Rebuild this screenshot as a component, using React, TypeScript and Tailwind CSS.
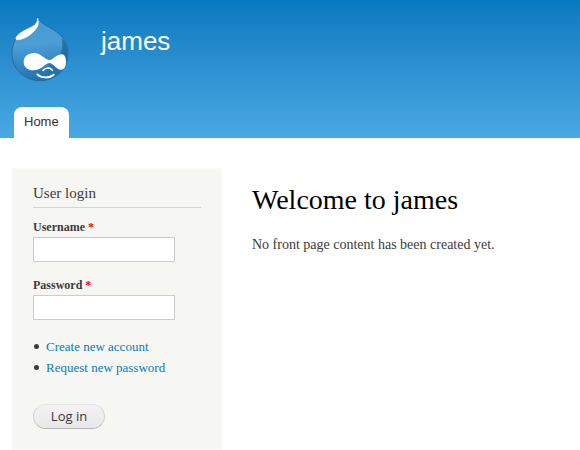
import React, { useState } from 'react';

const links = [
  { label: 'Create new account', href: '#register' },
  { label: 'Request new password', href: '#password' },
];

function Logo() {
  return (
    <svg viewBox="33 48 174 198" className="w-[58px] h-[66px]" role="img" aria-hidden="true">
      <defs>
        <linearGradient id="drop" x1="0.4" y1="0" x2="0.5" y2="1">
          <stop offset="0" stopColor="#4597d0" />
          <stop offset="0.4" stopColor="#4c9fd6" />
          <stop offset="0.7" stopColor="#3589c5" />
          <stop offset="1" stopColor="#2273ae" />
        </linearGradient>
        <linearGradient id="shade" x1="0" y1="0.8" x2="1" y2="0.4">
          <stop offset="0" stopColor="#2478b4" stopOpacity="0.1" />
          <stop offset="0.6" stopColor="#1c70ae" stopOpacity="0.7" />
          <stop offset="1" stopColor="#1d6ba5" stopOpacity="0.9" />
        </linearGradient>
      </defs>
      <path
        d="M113 52 C118 65 132 73 146 81 C180 98 204 122 204 160 C204 207 167 242 120 242 C73 242 36 207 36 160 C36 131 49 109 70 94 C91 80 113 78 113 52 Z"
        fill="url(#drop)"
        stroke="#32698e"
        strokeWidth="3"
      />
      <path
        d="M184 114 C197 126 203 140 203 160 C203 207 166 241 120 241 C94 241 74 232 58 215 C98 219 146 207 170 178 C188 156 191 133 184 114 Z"
        fill="url(#shade)"
      />
      <path
        d="M113 54 C116 68 116 76 109 85 C99 99 82 113 65 117 C53 120 46 121 48 114 C52 104 65 96 80 88 C98 79 113 75 113 54 Z"
        fill="#ffffff"
        stroke="#ffffff"
        strokeWidth="2"
      />
      <path
        d="M103 159 C121 159 137 180 149 180 C160 180 169 163 185 163 C194 163 198 173 198 186 C198 201 192 209 182 209 C169 209 158 189 148 189 C137 189 124 211 101 211 C82 211 71 201 71 186 C71 170 84 159 103 159 Z"
        fill="#ffffff"
      />
      <path d="M129 211 C138 202 150 201 157 211" fill="none" stroke="#ffffff" strokeWidth="5" strokeLinecap="round" />
      <path d="M112 223 C124 235 149 235 161 224" fill="none" stroke="#ffffff" strokeWidth="6" strokeLinecap="round" />
    </svg>
  );
}

type FieldProps = {
  id: string;
  label: string;
  type: string;
  value: string;
  onChange: (value: string) => void;
};

function Field({ id, label, type, value, onChange }: FieldProps) {
  return (
    <div>
      <label htmlFor={id} className="block text-[12px] leading-5 font-bold">
        {label} <span className="text-[#ff0000]">*</span>
      </label>
      <input
        id={id}
        type={type}
        value={value}
        required
        onChange={e => onChange(e.target.value)}
        className="block w-[142px] h-[25px] px-1 bg-white border border-[#cccccc] text-[13px] shadow-none outline-none"
      />
    </div>
  );
}

function UserLogin() {
  const [username, setUsername] = useState('');
  const [password, setPassword] = useState('');

  return (
    <aside className="w-[210px] shrink-0 bg-[#f6f6f2] border border-[#f9f9f9] px-5 pt-3 pb-5">
      <h2 className="text-[15px] leading-6 pb-0.5 border-b border-[#d6d6d6]">User login</h2>
      <form className="pt-[9px]" onSubmit={e => e.preventDefault()}>
        <div className="space-y-[13px]">
          <Field id="username" label="Username" type="text" value={username} onChange={setUsername} />
          <Field id="password" label="Password" type="password" value={password} onChange={setPassword} />
        </div>
        <ul className="mt-4 pl-px text-[13px] leading-[21px]">
          {links.map(link => (
            <li key={link.href} className="flex items-center gap-[7px] before:size-[5px] before:rounded-full before:bg-[#3b3b3b]">
              <a href={link.href} className="text-[#0b7abb] hover:underline">{link.label}</a>
            </li>
          ))}
        </ul>
        <button
          type="submit"
          className="block mt-[26px] w-[72px] h-[25px] rounded-full border border-[#e4e4e4] border-x-[#d2d2d2] border-b-[#b4b4b4] bg-linear-to-b from-[#f3f3f3] to-[#e8e8e8] font-['Open_Sans','Noto_Sans',sans-serif] text-[13px] leading-[21px] text-[#3a3a3a] cursor-pointer"
        >
          Log in
        </button>
      </form>
    </aside>
  );
}

export default function App() {
  return (
    <div className="min-h-screen bg-white font-['Liberation_Serif',serif] text-[#3b3b3b]">
      <header className="bg-linear-to-b from-[#0779bf] to-[#48a9e4] font-['Liberation_Sans',sans-serif]">
        <div className="flex items-start gap-8 pl-[11px] pt-4">
          <a href="#home" aria-label="Home"><Logo /></a>
          <a href="#home" className="pt-[9px] text-[26px] leading-8 text-[#fffeff]">james</a>
        </div>
        <nav className="flex pl-[14px] pt-[25px]">
          <a href="#home" className="h-[31px] px-[10px] rounded-t-lg bg-white text-[13px] leading-[29px] text-[#333333]">
            Home
          </a>
        </nav>
      </header>

      <div className="flex items-start gap-[30px] px-3 pt-[30px]">
        <UserLogin />
        <main className="flex-1 pt-[14px]">
          <h1 className="text-[28px] leading-9 text-black">Welcome to james</h1>
          <p className="mt-4 text-[14px] leading-[21px]">No front page content has been created yet.</p>
        </main>
      </div>
    </div>
  );
}
